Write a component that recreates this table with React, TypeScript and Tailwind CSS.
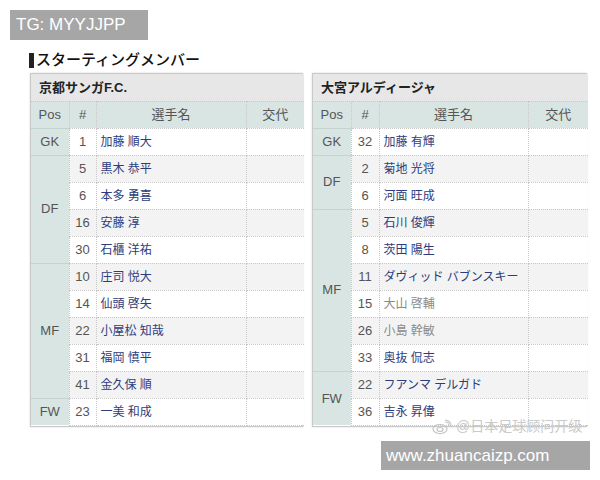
type Player = { no: number; name: string; faded?: boolean };
type Group = { pos: string; players: Player[] };

const kyoto: Group[] = [
  { pos: 'GK', players: [{ no: 1, name: '加藤 順大' }] },
  {
    pos: 'DF',
    players: [
      { no: 5, name: '黒木 恭平' },
      { no: 6, name: '本多 勇喜' },
      { no: 16, name: '安藤 淳' },
      { no: 30, name: '石櫃 洋祐' },
    ],
  },
  {
    pos: 'MF',
    players: [
      { no: 10, name: '庄司 悦大' },
      { no: 14, name: '仙頭 啓矢' },
      { no: 22, name: '小屋松 知哉' },
      { no: 31, name: '福岡 慎平' },
      { no: 41, name: '金久保 順' },
    ],
  },
  { pos: 'FW', players: [{ no: 23, name: '一美 和成' }] },
];

const omiya: Group[] = [
  { pos: 'GK', players: [{ no: 32, name: '加藤 有輝' }] },
  {
    pos: 'DF',
    players: [
      { no: 2, name: '菊地 光将' },
      { no: 6, name: '河面 旺成' },
    ],
  },
  {
    pos: 'MF',
    players: [
      { no: 5, name: '石川 俊輝' },
      { no: 8, name: '茨田 陽生' },
      { no: 11, name: 'ダヴィッド バブンスキー' },
      { no: 15, name: '大山 啓輔', faded: true },
      { no: 26, name: '小島 幹敏', faded: true },
      { no: 33, name: '奥抜 侃志' },
    ],
  },
  {
    pos: 'FW',
    players: [
      { no: 22, name: 'フアンマ デルガド' },
      { no: 36, name: '吉永 昇偉' },
    ],
  },
];

const cell = 'border border-dotted border-[#c8c8c8]';

function Lineup({ team, groups, cols }: { team: string; groups: Group[]; cols: [string, string, string, string] }) {
  let idx = 0;
  return (
    <div className="border border-[#c9c9c9] shadow-[0_0_2px_rgba(0,0,0,0.15)]">
      <table className="w-full table-fixed border-collapse text-[13px] text-[#555]">
        <colgroup>
          <col className={cols[0]} />
          <col className={cols[1]} />
          <col className={cols[2]} />
          <col className={cols[3]} />
        </colgroup>
        <thead>
          <tr className="h-[27px] bg-[#e7e7e7]">
            <th colSpan={4} className="pl-2 text-left text-[13px] font-bold text-[#222]">
              {team}
            </th>
          </tr>
          <tr className="h-[27px] bg-[#d8e5e2]">
            <th className={`${cell} border-l-0 font-normal`}>Pos</th>
            <th className={`${cell} font-normal`}>#</th>
            <th className={`${cell} font-normal`}>選手名</th>
            <th className={`${cell} border-r-0 font-normal`}>交代</th>
          </tr>
        </thead>
        <tbody>
          {groups.map((g) =>
            g.players.map((p, i) => {
              const stripe = idx++ % 2 === 1 ? 'bg-[#f3f3f3]' : 'bg-white';
              return (
                <tr key={g.pos + p.no} className={`h-[27px] ${stripe}`}>
                  {i === 0 && (
                    <td
                      rowSpan={g.players.length}
                      className="border-t border-solid border-[#c4d3d0] bg-[#d8e5e2] text-center"
                    >
                      {g.pos}
                    </td>
                  )}
                  <td className={`${cell} text-center`}>{p.no}</td>
                  <td
                    className={`${cell} whitespace-nowrap pl-1 text-[12px] ${p.faded ? 'text-[#8a8a8a]' : 'text-[#2c3c7c]'}`}
                  >
                    {p.name}
                  </td>
                  <td className={`${cell} border-r-0`}></td>
                </tr>
              );
            }),
          )}
        </tbody>
      </table>
    </div>
  );
}

export default function App() {
  return (
    <div
      className="relative h-[480px] w-[600px] overflow-hidden bg-white"
      style={{ fontFamily: '"Liberation Sans", "Noto Sans CJK JP", sans-serif' }}
    >
      <div className="pl-[10px] pt-[10px]">
        <div className="flex h-[30px] w-[138px] items-center bg-[#a6a6a6] pl-[6px] text-[17px] text-white">
          TG: MYYJJPP
        </div>
      </div>
      <div className="ml-[29px] mt-[12px] flex items-center">
        <div className="h-[15px] w-[5px] bg-[#222]" />
        <div className="ml-[2px] text-[15px] font-medium leading-[16px] text-[#111]">スターティングメンバー</div>
      </div>
      <div className="ml-[30px] mt-[5px] flex items-start gap-[9px]">
        <div className="w-[273px]">
          <Lineup team="京都サンガF.C." groups={kyoto} cols={['w-[38px]', 'w-[27px]', 'w-[150px]', 'w-[58px]']} />
        </div>
        <div className="w-[275px]">
          <Lineup team="大宮アルディージャ" groups={omiya} cols={['w-[38px]', 'w-[28px]', 'w-[149px]', 'w-[60px]']} />
        </div>
      </div>
      <div className="absolute left-[432px] top-[416px] flex items-center gap-1 text-[14px] text-[#cacaca]">
        <svg width="20" height="16" viewBox="0 0 20 16" fill="none" stroke="#c4c4c4" strokeWidth="1.2">
          <ellipse cx="8" cy="10" rx="7" ry="4.5" />
          <ellipse cx="8" cy="10.5" rx="3" ry="2" />
          <path d="M13 3a4 4 0 0 1 4 4" />
          <path d="M13 1a6 6 0 0 1 6 6" />
        </svg>
        <span>@日本足球顾问开级</span>
      </div>
      <div className="absolute left-[381px] top-[441px] flex h-[29px] w-[209px] items-center bg-[#a6a6a6] pl-[5px] text-[17px] text-white">
        www.zhuancaizp.com
      </div>
    </div>
  );
}
